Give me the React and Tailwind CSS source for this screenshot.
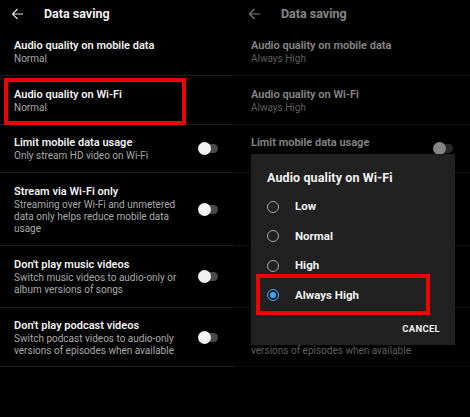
import React from 'react';

// hide: indices of text lines (0 = title) that sit under the dialog on the right screen
const rows = [
  { title: 'Audio quality on mobile data', sub: ['Normal'], alt: ['Always High'], h: 'h-[48px]' },
  { title: 'Audio quality on Wi-Fi', sub: ['Normal'], alt: ['Always High'], h: 'h-[49px]' },
  { title: 'Limit mobile data usage', sub: ['Only stream HD video on Wi-Fi'], toggle: true, h: 'h-[48px]', hide: [1] },
  {
    title: 'Stream via Wi-Fi only',
    sub: ['Streaming over Wi-Fi and unmetered', 'data only helps reduce mobile data', 'usage'],
    toggle: true,
    h: 'h-[73px]',
    hide: [0, 1, 2, 3],
  },
  {
    title: "Don't play music videos",
    sub: ['Switch music videos to audio-only or', 'album versions of songs'],
    toggle: true,
    h: 'h-[62px]',
    hide: [0, 1, 2],
  },
  {
    title: "Don't play podcast videos",
    sub: ['Switch podcast videos to audio-only', 'versions of episodes when available'],
    toggle: true,
    h: 'h-[59px]',
    hide: [0, 1],
  },
];

const options = ['Low', 'Normal', 'High', 'Always High'];

function BackArrow() {
  return (
    <svg width="13" height="12" viewBox="0 0 13 12" fill="none" stroke="#e8e8e8" strokeWidth="1.1">
      <path d="M12 6H1.5M6.5 1L1.5 6l5 5" />
    </svg>
  );
}

function Toggle() {
  return (
    <div className="relative w-[20px] h-[13px] mr-[17px] shrink-0">
      <div className="absolute right-0 top-[2px] w-[14px] h-[9px] rounded-full bg-[#4a4a4a]" />
      <div className="absolute left-0 top-0 w-[13px] h-[13px] rounded-full bg-[#f1f1f1]" />
    </div>
  );
}

function Screen({ dim }) {
  const hidden = (r, i) => (dim && r.hide && r.hide.includes(i) ? 'invisible' : '');
  return (
    <div className="flex flex-col">
      <div className="h-[28px] flex items-center">
        <div className="ml-[11px] flex items-center">
          <BackArrow />
        </div>
        <span className="ml-[20px] text-[12.5px] font-bold text-[#f1f1f1]">Data saving</span>
      </div>
      {rows.map((r) => (
        <div key={r.title} className={`${r.h} flex items-center border-b border-[#1b1b1b]`}>
          <div className="flex-1 pl-[14px] flex flex-col">
            <span className={`text-[11px] leading-[15px] font-semibold text-[#f1f1f1] whitespace-nowrap ${hidden(r, 0)}`}>
              {r.title}
            </span>
            {(dim && r.alt ? r.alt : r.sub).map((s, i) => (
              <span key={s} className={`text-[10px] leading-[12px] text-[#aaaaaa] whitespace-nowrap ${hidden(r, i + 1)}`}>
                {s}
              </span>
            ))}
          </div>
          {r.toggle && <Toggle />}
        </div>
      ))}
    </div>
  );
}

export default function App() {
  return (
    <div className="w-[470px] h-[417px] bg-black flex overflow-hidden" style={{ fontFamily: 'Roboto, "Liberation Sans", sans-serif' }}>
      <div className="relative w-[235px] h-full">
        <Screen />
        <div className="absolute left-[4px] top-[78px] w-[182px] h-[47px] border-[4px] border-[#f20000]" />
      </div>
      <div className="relative w-[235px] h-full pl-[2px]">
        <Screen dim />
        <div className="absolute inset-0 bg-black/[0.45]" />
        <div className="absolute left-[16px] top-[154px] w-[204px] h-[191px] bg-[#212121] flex flex-col">
          <div className="pl-[16px] pt-[15px] h-[38px] text-[12.5px] font-bold text-[#f1f1f1] tracking-[0.1px]">Audio quality on Wi-Fi</div>
          <div className="flex flex-col">
            {options.map((o) => {
              const sel = o === 'Always High';
              return (
                <div key={o} className="h-[29.5px] flex items-center">
                  <div
                    className={`ml-[16px] w-[12px] h-[12px] rounded-full flex items-center justify-center border-[1.5px] ${sel ? 'border-[#3ea6ff]' : 'border-[#a8a8a8]'}`}
                  >
                    {sel && <div className="w-[6px] h-[6px] rounded-full bg-[#3ea6ff]" />}
                  </div>
                  <span className="ml-[16px] text-[11.5px] font-bold text-[#f1f1f1]">{o}</span>
                </div>
              );
            })}
          </div>
          <div className="flex justify-end pr-[15px] mt-[12px]">
            <span className="text-[9.5px] font-bold tracking-[0.3px] text-[#f1f1f1]">CANCEL</span>
          </div>
          <div className="absolute left-[5px] top-[120px] w-[174px] h-[41px] border-[4px] border-[#f20000]" />
        </div>
      </div>
    </div>
  );
}
